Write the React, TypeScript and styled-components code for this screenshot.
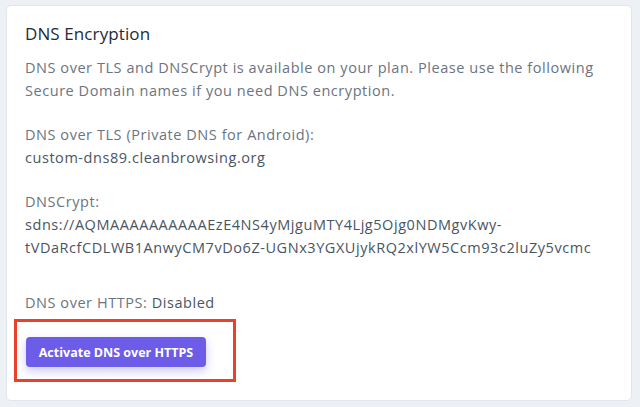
import React from "react";
import styled, { createGlobalStyle } from "styled-components";

const Global = createGlobalStyle`
  html, body { margin: 0; padding: 0; background: #edf0f4; }
  body { font-family: "Open Sans", "Liberation Sans", sans-serif; }
`;

const Page = styled.div`
  width: 640px;
  height: 407px;
  box-sizing: border-box;
  padding: 5px 8px 6px 6px;
  background: #edf0f4;
`;

const Card = styled.section`
  box-sizing: border-box;
  height: 396px;
  background: #ffffff;
  border: 1px solid #e1e6ec;
  border-radius: 5px;
  padding: 16px 18px 0 18px;
`;

const Title = styled.h2`
  margin: 0 0 10px 0;
  font-size: 17px;
  line-height: 24px;
  font-weight: 400;
  letter-spacing: 0.1px;
  color: #1c2b3e;
`;

const Para = styled.p<{ $gap?: number }>`
  margin: 0 0 ${(p) => p.$gap ?? 21}px 0;
  font-size: 14.5px;
  line-height: 23px;
  letter-spacing: 0.55px;
  color: #6b7480;
  white-space: nowrap;
`;

const Value = styled.span`
  color: #4a5562;
`;

const Highlight = styled.div`
  position: relative;
  display: inline-block;
  margin-top: 23px;
  margin-left: 1px;
`;

const Frame = styled.div`
  position: absolute;
  left: -12px;
  top: -18px;
  right: -30px;
  bottom: -15px;
  border: 3px solid #e8432a;
  pointer-events: none;
`;

const Button = styled.button`
  display: block;
  width: 180px;
  height: 30px;
  border: none;
  border-radius: 4px;
  background: #6c5ce7;
  color: #ffffff;
  font-family: "Open Sans", "Liberation Sans", sans-serif;
  font-weight: 700;
  font-size: 12.5px;
  box-shadow: 0 4px 10px rgba(108, 92, 231, 0.35);
  cursor: pointer;
`;

export default function App() {
  return (
    <>
      <Global />
      <Page>
        <Card>
          <Title>DNS Encryption</Title>
          <Para>
            DNS over TLS and DNSCrypt is available on your plan. Please use the following
            <br />
            Secure Domain names if you need DNS encryption.
          </Para>
          <Para>
            DNS over TLS (Private DNS for Android):
            <br />
            <Value>custom-dns89.cleanbrowsing.org</Value>
          </Para>
          <Para $gap={32}>
            DNSCrypt:
            <br />
            <Value>
              sdns://AQMAAAAAAAAAAEzE4NS4yMjguMTY4Ljg5Ojg0NDMgvKwy-
              <br />
              tVDaRcfCDLWB1AnwyCM7vDo6Z-UGNx3YGXUjykRQ2xlYW5Ccm93c2luZy5vcmc
            </Value>
          </Para>
          <Para $gap={0}>
            DNS over HTTPS: <Value>Disabled</Value>
          </Para>
          <Highlight>
            <Button>Activate DNS over HTTPS</Button>
            <Frame />
          </Highlight>
        </Card>
      </Page>
    </>
  );
}
